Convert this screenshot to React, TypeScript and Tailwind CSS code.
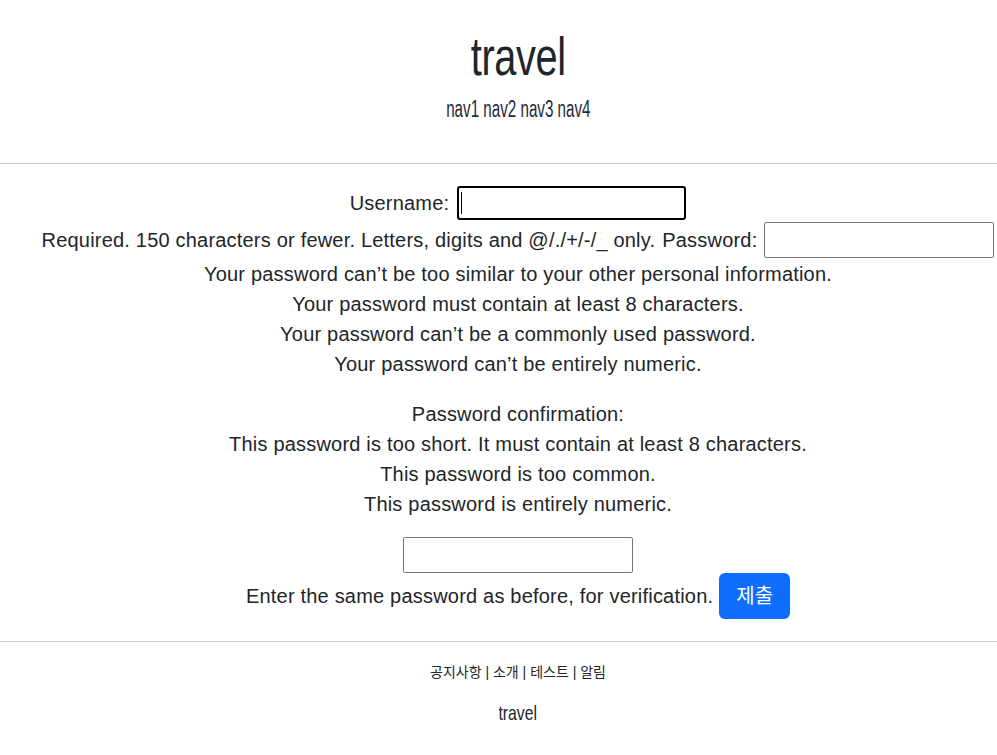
const body = { fontFamily: '"Liberation Sans", "Noto Sans CJK KR", sans-serif' };

function Field({ focused = false }: { focused?: boolean }) {
  if (focused) {
    return (
      <span className="relative inline-block">
        <input
          type="text"
          className="block h-[34px] w-[229px] rounded-[3px] border-2 border-black bg-white px-1 outline-none"
        />
        <span className="absolute left-[4px] top-[6px] h-[22px] w-[1px] bg-black" />
      </span>
    );
  }
  return (
    <input
      type="text"
      className="block h-[36px] w-[230px] rounded-[2px] border border-[#767676] bg-white px-1 outline-none"
    />
  );
}

export default function App() {
  return (
    <div className="min-h-screen overflow-hidden bg-white text-[#212529]" style={body}>
      <div className="w-[1036px]">
        <header className="flex flex-col items-center pt-[26px] pb-[39px]">
          <h1 className="inline-block scale-x-[0.75] text-[53px] leading-[62px] tracking-[-0.5px]">travel</h1>
          <nav className="mt-[6px] inline-block scale-x-[0.66] text-[23px] leading-[30px] text-[#25283a]">
            <a>nav1</a> <a>nav2</a> <a>nav3</a> <a>nav4</a>
          </nav>
        </header>
      </div>
      <hr className="border-t border-[#c8c8c8]" />
      <div className="w-[1036px]">
        <main className="flex flex-col items-center pt-[20px] text-[20px] leading-[30px] tracking-[0.2px]">
          <div className="flex h-[37px] items-center gap-[8px]">
            <label>Username:</label>
            <Field focused />
          </div>
          <div className="flex h-[38px] items-center gap-[7px]">
            <span>Required. 150 characters or fewer. Letters, digits and @/./+/-/_ only.</span>
            <label>Password:</label>
            <Field />
          </div>
          <ul className="flex flex-col items-center">
            <li>Your password can’t be too similar to your other personal information.</li>
            <li>Your password must contain at least 8 characters.</li>
            <li>Your password can’t be a commonly used password.</li>
            <li>Your password can’t be entirely numeric.</li>
          </ul>
          <label className="mt-[20px]">Password confirmation:</label>
          <ul className="flex flex-col items-center">
            <li>This password is too short. It must contain at least 8 characters.</li>
            <li>This password is too common.</li>
            <li>This password is entirely numeric.</li>
          </ul>
          <div className="mt-[18px]">
            <Field />
          </div>
          <div className="flex items-center gap-[6px]">
            <span>Enter the same password as before, for verification.</span>
            <button className="h-[46px] rounded-[6px] bg-[#0d6efd] px-[17px] text-[20px] tracking-normal text-white">제출</button>
          </div>
        </main>
      </div>
      <hr className="mt-[22px] border-t border-[#c8c8c8]" />
      <div className="w-[1036px]">
        <footer className="flex flex-col items-center pt-[20px]">
          <div className="text-[14px] leading-[20px]">
            <a>공지사항</a> | <a>소개</a> | <a>테스트</a> | <a>알림</a>
          </div>
          <div className="mt-[16px] inline-block scale-x-[0.75] text-[21px] leading-[30px]">travel</div>
        </footer>
      </div>
    </div>
  );
}
